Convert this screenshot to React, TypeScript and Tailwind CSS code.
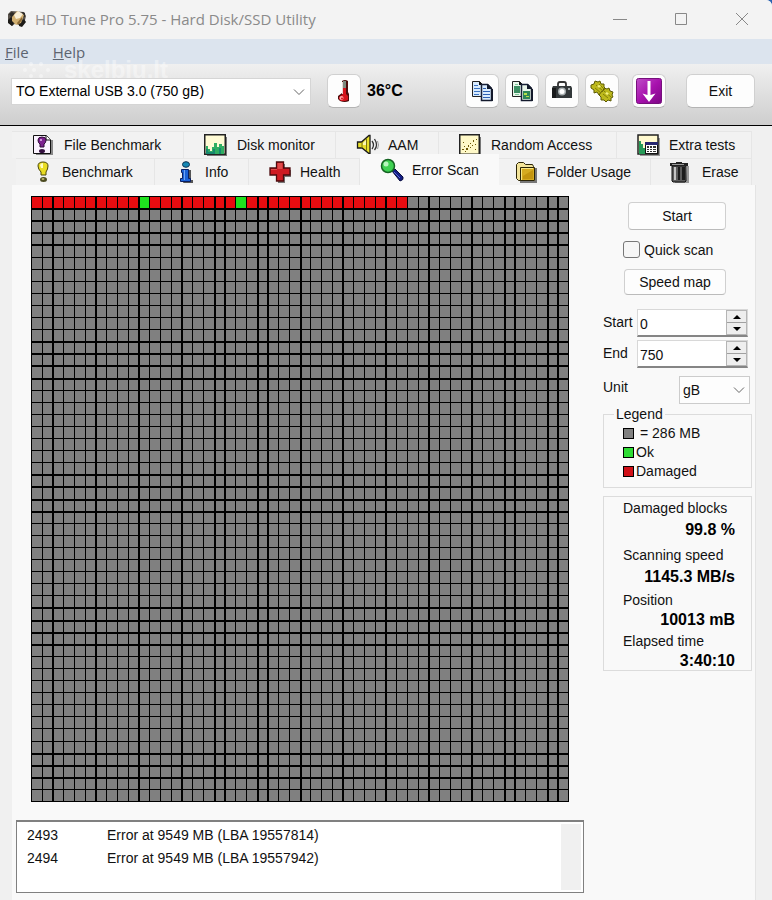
import { useState } from 'react';
import type { ReactNode } from 'react';

const COLS = 50;
const ROWS = 50;
const GRID_W = 538;
const GRID_H = 606;
const SCANNED = 35;
const OK_BLOCKS = [10, 19];
const THICK_COLS = [2, 6, 10, 14, 17, 18, 21, 22, 25, 29, 33, 37, 41, 44, 45, 48, 49];
const THICK_ROWS = [1, 2, 3, 4, 12, 13, 14, 15, 23, 24, 25, 26, 34, 35, 36, 37, 46, 47, 48];

const colX = (i: number) => Math.round((i * (GRID_W - 1)) / COLS);
const rowY = (i: number) => Math.round((i * (GRID_H - 1)) / ROWS);

function BlockMap() {
  return (
    <svg viewBox={`0 0 ${GRID_W} ${GRID_H}`} shapeRendering="crispEdges" className="block w-full" role="img" aria-label="Block map">
      <rect width={GRID_W} height={GRID_H} fill="#808080" />
      {Array.from({ length: SCANNED }, (_, i) => (
        <rect
          key={i}
          x={colX(i)}
          y={0}
          width={colX(i + 1) - colX(i)}
          height={rowY(1)}
          fill={OK_BLOCKS.includes(i) ? '#1fe01f' : '#e80c10'}
        />
      ))}
      {Array.from({ length: COLS + 1 }, (_, i) => (
        <rect key={i} x={colX(i)} y={0} width={THICK_COLS.includes(i) ? 2 : 1} height={GRID_H} fill="#000" />
      ))}
      {Array.from({ length: ROWS + 1 }, (_, i) => (
        <rect key={i} x={0} y={rowY(i)} width={GRID_W} height={THICK_ROWS.includes(i) ? 2 : 1} fill="#000" />
      ))}
    </svg>
  );
}

function AppIcon() {
  return (
    <svg viewBox="0 0 20 20" className="w-5 h-5">
      <path d="M1 5l3-3 13 1 2 4-2 8-4 2-4-3-4 3-4-4z" fill="#57514a" />
      <path d="M1 11l3-3 3 2v4l-2 3-4-3zM12 14l5-4 2 3-4 5-3-1z" fill="#1d1b18" />
      <path d="M2 5l3-2 3 2-3 4zM15 3l3 1v4l-3-1z" fill="#2d2a26" />
      <path d="M5 8l5-6 7 4-3 8-5 2-4-4z" fill="#d2b071" />
      <path d="M7 6l4-4 5 3-3 4-4 1z" fill="#f8eed6" />
      <path d="M10 14l5-6v3l-4 5z" fill="#8c6a35" />
    </svg>
  );
}

function ThermometerIcon() {
  return (
    <svg viewBox="0 0 14 24" className="w-[14px] h-6">
      <path d="M5 2q3-2 6 0v11l1 2v7q-4 2-9 0l-2-2v-3l4-3z" fill="#4a0c0c" />
      <path d="M6 2h3v8H6z" fill="#7e8b80" />
      <path d="M6 9h3v6l2 2v4l-3 1H4l-2-2v-2l4-3z" fill="#d5141c" />
      <path d="M5 3h1v12H5z" fill="#e9d5d5" />
      <circle cx="4.500" cy="19" r="2" fill="#ffaaaa" />
      <circle cx="5" cy="19.500" r="1" fill="#d5141c" />
    </svg>
  );
}

function CopyIcon({ image = false }: { image?: boolean }) {
  const page = image ? '#e9f6ea' : '#d9ecff';
  return (
    <svg viewBox="0 0 22 22" className="w-[22px] h-[22px]">
      <path d="M1.500 1.500h7l3 3v12h-10z" fill={page} stroke="#222" />
      <path d="M8 1v4h4z" fill="#111" />
      <path d="M10.500 4.500h6l4 4v12h-10z" fill={page} stroke="#182038" strokeWidth="1.500" />
      <path d="M16 4v5h5v-1l-4-4zM20 9h2v12H11v-1h9z" fill="#141a2c" />
      {image ? (
        <>
          <path d="M3 6h6v7H3z" fill="#3d8f63" />
          <path d="M4 4h3v1H4zM4 14h4v1H4z" fill="#7fc79a" />
          <path d="M12 11h7v8h-7z" fill="#2f8658" />
          <path d="M13 13h3v2h-3zM15 16h3v1h-3z" fill="#b8e04a" />
        </>
      ) : (
        <>
          <path d="M3 5h4v1H3zM3 8h6v1H3zM3 11h6v1H3zM3 14h5v1H3z" fill="#3d74c4" />
          <path d="M12 8h3v1h-3zM12 11h7v1h-7zM12 14h7v1h-7zM12 17h7v1h-7z" fill="#2d61b4" />
        </>
      )}
    </svg>
  );
}

function CameraIcon() {
  return (
    <svg viewBox="0 0 22 20" className="w-[22px] h-5">
      <path d="M7 6V3q0-2 2-2h4q2 0 2 2v3" fill="none" stroke="#333" strokeWidth="1.800" />
      <path d="M2 5h18l1 2v10H1V7z" fill="#33383a" />
      <path d="M1 7h4v10H1z" fill="#181a1b" />
      <circle cx="11" cy="10.500" r="4" fill="#a9b0b2" />
      <circle cx="11" cy="10.500" r="2.500" fill="#fff" />
      <path d="M17 7h2v2h-2z" fill="#a9b0b2" />
    </svg>
  );
}

function GearsIcon() {
  return (
    <svg viewBox="0 0 24 22" className="w-6 h-[22px]">
      <g stroke="#5c5a05" strokeWidth="1">
        <g fill="#bdb91c">
          <path d="M1 5l3-1 1-3 3 1 2-1 1 3 3 0 0 3 2 2-2 2 0 3-3-1-2 2-2-3-3 1 0-3-3-2z" />
          <path d="M11 12l2-1 1-3 3 1 2-1 1 3 3 1-1 3 1 2-2 1 0 3-3-1-2 2-2-2-3 0 0-3-2-2z" />
        </g>
        <path d="M6 5l7 6M5 8l6 5M9 4l6 6M14 11l7 6M13 14l5 4" fill="none" stroke="#837f08" />
      </g>
      <path d="M7 6l2-1 2 1-2 2zM15 13l2-1 2 2-2 1z" fill="#f4f27d" />
    </svg>
  );
}

function UpdateIcon() {
  return (
    <svg viewBox="0 0 26 26" className="w-[26px] h-[26px]">
      <defs>
        <linearGradient id="purple" x1="0" y1="0" x2="1" y2="1">
          <stop offset="0" stopColor="#c04fc8" />
          <stop offset=".5" stopColor="#a812ae" />
          <stop offset="1" stopColor="#7c0684" />
        </linearGradient>
      </defs>
      <rect x=".5" y=".5" width="25" height="25" rx="2" fill="url(#purple)" stroke="#76107c" />
      <path d="M11.500 3h3v14l5-1.500-6.500 8.500-6.500-8.500 5 1.500z" fill="#fff" />
    </svg>
  );
}

function FileBenchmarkIcon() {
  return (
    <svg viewBox="0 0 22 22" className="w-[22px] h-[22px]">
      <path d="M4 21h17V6h-2v13H4z" fill="#888" />
      <path d="M1.500 1.500h13l4 4v14h-17z" fill="#fbf3ff" stroke="#111" />
      <path d="M14 1.500v4.500h5" fill="#fff" stroke="#111" />
      <path d="M6 6q0-3 4-3t4 3q0 3-2 4v3H8v-3Q6 9 6 6z" fill="#7c1f8f" stroke="#2d0a36" />
      <circle cx="9" cy="6" r="1" fill="#e8b9f2" />
      <ellipse cx="10" cy="17" rx="3" ry="2" fill="#351040" />
    </svg>
  );
}

function MonitorIcon() {
  return (
    <svg viewBox="0 0 23 22" className="w-[23px] h-[22px]">
      <path d="M3 22h20V3h-2v17H3z" fill="#777" />
      <rect x=".75" y=".75" width="20.500" height="19.500" fill="#fffbd5" stroke="#222" strokeWidth="1.500" />
      <path d="M2 20v-8h2v3h2v2h2v-4h2v-4h3v4h2v-3h3v2h2v8z" fill="#2fae62" />
      <path d="M2 20v-5h2v3h5v-3h2v5zM15 20v-6h2v6z" fill="#17886f" />
    </svg>
  );
}

function SpeakerIcon() {
  return (
    <svg viewBox="0 0 24 22" className="w-6 h-[22px]">
      <path d="M1.500 8h4L13 1.500h1v18h-1L6 14H1.500z" fill="#e8df2a" stroke="#1a1a1a" strokeWidth="1.300" />
      <path d="M6 8v6M10.500 5v12" stroke="#7a7412" />
      <path d="M7 9l3-3v5H7z" fill="#fbf8b4" />
      <path d="M16 7q3 4 0 8M18.500 5q4 6 0 11" fill="none" stroke="#333" strokeWidth="1.300" />
      <path d="M21.500 7q2 4 0 8" fill="none" stroke="#999" />
    </svg>
  );
}

function ScatterIcon() {
  return (
    <svg viewBox="0 0 22 22" className="w-[22px] h-[22px]">
      <path d="M3 22h19V3h-2v17H3z" fill="#777" />
      <rect x=".75" y=".75" width="19.500" height="19.500" fill="#fff9c8" stroke="#222" strokeWidth="1.500" />
      <path
        d="M3 15h2v1H3zM5 12h1v1H5zM7 14h2v2H7zM6 17h1v1H6zM9 11h1v2H9zM11 13h1v1h-1zM11 9h1v1h-1zM13 11h1v1h-1zM14 6h1v2h-1zM16 10h1v1h-1zM17 5h1v1h-1zM4 8h1v1H4zM16 15h1v1h-1z"
        fill="#6d5806"
      />
    </svg>
  );
}

function ExtraIcon() {
  return (
    <svg viewBox="0 0 24 22" className="w-6 h-[22px]">
      <path d="M3 22h20V4h-2v16H3z" fill="#999" />
      <rect x="1" y="1" width="20" height="19" fill="#fff9cf" stroke="#222" strokeWidth="1.500" />
      <path d="M2 7h2v3h2v4h2v6H2z" fill="#279b58" />
      <rect x="8.500" y="8.500" width="12" height="11" fill="#fff" stroke="#111" />
      <path d="M8 8h13v3H8z" fill="#26266e" />
      <path d="M10 12h2v2h-2zM13 12h2v2h-2zM16 12h3v2h-3zM10 15h2v1h-2zM13 15h2v1h-2zM16 15h3v1h-3zM10 17h2v1h-2zM13 17h2v1h-2zM16 17h3v1h-3z" fill="#333" />
    </svg>
  );
}

function BulbIcon() {
  return (
    <svg viewBox="0 0 14 22" className="w-[14px] h-[22px]">
      <path d="M2 5q0-4 5-4t5 4q0 3-2 6v3H5v-3Q2 8 2 5z" fill="#e9dd23" stroke="#4c4806" />
      <path d="M4 4q1-2 3-2v5H5z" fill="#fffcc0" />
      <ellipse cx="7.500" cy="18.500" rx="3.500" ry="2.500" fill="#4b4a20" />
      <ellipse cx="7" cy="18" rx="1.500" ry="1" fill="#b9b56a" />
    </svg>
  );
}

function InfoIcon() {
  return (
    <svg viewBox="0 0 14 22" className="w-[14px] h-[22px]">
      <path d="M4 22h10v-3h-2V9h-2z" fill="#555" />
      <ellipse cx="7" cy="3.500" rx="3.500" ry="2.800" fill="#1688b4" stroke="#0b2f50" />
      <path d="M2.500 8.500h7v9h2v3h-10v-3h2v-6h-1z" fill="#1c62d6" stroke="#0a1f63" />
      <path d="M5 9h1v10H5z" fill="#6fa4f4" />
    </svg>
  );
}

function CrossIcon() {
  return (
    <svg viewBox="0 0 23 22" className="w-[23px] h-[22px]">
      <path d="M9 3h7v6h6v7h-6v6H9z" fill="#777" />
      <path d="M7.500 1h7v6h6.500v7h-6.500v6h-7v-6H1V7h6.500z" fill="#cf1a22" stroke="#4d0a0d" strokeWidth="1.300" />
      <path d="M8.500 2h5v6H8.500zM2 8h6v1H2z" fill="#e04a4a" />
    </svg>
  );
}

function SearchIcon() {
  return (
    <svg viewBox="0 0 24 24" className="w-6 h-6">
      <path d="M12 13l3-2 8 8q1 3-3 4z" fill="#141d84" stroke="#0a0e3e" />
      <path d="M14 14l6 6" stroke="#5867d9" />
      <circle cx="8" cy="8" r="6.500" fill="#3fd152" stroke="#146322" strokeWidth="1.500" />
      <circle cx="6" cy="6" r="2.500" fill="#b7f7bd" />
    </svg>
  );
}

function FolderIcon() {
  return (
    <svg viewBox="0 0 22 22" className="w-[22px] h-[22px]">
      <path d="M5 22h17V7h-2v13H5z" fill="#777" />
      <path d="M1.500 3.500l2-2h5l2 2h7l1 2v3h-12v11h-3l-2-2z" fill="#f3e49a" stroke="#2b2407" />
      <path d="M5.500 6.500h14v13h-14z" fill="#d6ab20" stroke="#2b2407" />
      <path d="M6 7h12v1H7v11H6z" fill="#f7e584" />
      <path d="M8 15l10-6v9H8z" fill="#c4950f" />
    </svg>
  );
}

function BinIcon() {
  return (
    <svg viewBox="0 0 21 23" className="w-[21px] h-[23px]">
      <path d="M18 5h2v17H6v-2h11z" fill="#999" />
      <path d="M3 5h14v15l-1 1H4l-1-1z" fill="#5c5c5c" stroke="#111" />
      <path d="M5 6h2v13H5z" fill="#c4c4c4" />
      <path d="M9 6h2v13H9zM13 6h3v13h-3z" fill="#1c1c1c" />
      <path d="M1 2h6V1h6v1h6v3H1z" fill="#222" />
      <path d="M3 3h12v1H3z" fill="#999" />
    </svg>
  );
}

function Chevron({ className }: { className: string }) {
  return (
    <svg viewBox="0 0 12 8" className={`pointer-events-none absolute w-3 h-2 ${className}`}>
      <path d="M1 1.500l5 5 5-5" fill="none" stroke="#666" />
    </svg>
  );
}

function ToolButton({ label, children }: { label: string; children: ReactNode }) {
  return (
    <button
      aria-label={label}
      className="flex items-center justify-center w-[34px] h-[34px] shrink-0 bg-[#fdfdfd] border border-[#d0d0d0] border-b-[#b4b4b4] rounded-md"
    >
      {children}
    </button>
  );
}

type TabInfo = { name: string; icon: ReactNode; gap: string };

const topTabs: TabInfo[] = [
  { name: 'File Benchmark', icon: <FileBenchmarkIcon />, gap: 'gap-[10px] pl-5' },
  { name: 'Disk monitor', icon: <MonitorIcon />, gap: 'gap-[10px] pl-5' },
  { name: 'AAM', icon: <SpeakerIcon />, gap: 'gap-2 pl-5' },
  { name: 'Random Access', icon: <ScatterIcon />, gap: 'gap-[10px] pl-5' },
  { name: 'Extra tests', icon: <ExtraIcon />, gap: 'gap-2 pl-5' },
];

const bottomTabs: TabInfo[] = [
  { name: 'Benchmark', icon: <BulbIcon />, gap: 'gap-3 pl-5' },
  { name: 'Info', icon: <InfoIcon />, gap: 'gap-3 pl-6' },
  { name: 'Health', icon: <CrossIcon />, gap: 'gap-2 pl-5' },
  { name: 'Error Scan', icon: <SearchIcon />, gap: 'gap-2 pl-5' },
  { name: 'Folder Usage', icon: <FolderIcon />, gap: 'gap-[10px] pl-4' },
  { name: 'Erase', icon: <BinIcon />, gap: 'gap-3 pl-[18px]' },
];

function Tab({ tab, active }: { tab: TabInfo; active: boolean }) {
  return (
    <button
      role="tab"
      aria-selected={active}
      className={`flex items-center whitespace-nowrap ${tab.gap} ${
        active ? 'bg-[#f9f9f9] -mt-1' : 'bg-[#f2f2f2] border-t border-r border-[#e6e6e6]'
      }`}
    >
      {tab.icon}
      {tab.name}
    </button>
  );
}

function SpinBox({ id, label, initial }: { id: string; label: string; initial: number }) {
  const [value, setValue] = useState(initial);
  return (
    <div className="flex pr-1">
      <label htmlFor={id} className="w-[34px] shrink-0 pt-[2px]">{label}</label>
      <div className="flex flex-1 min-w-0 h-7 bg-white border border-[#d8d8d8] border-b-2 border-b-[#858585]">
        <input
          id={id}
          value={value}
          onChange={(e) => setValue(Number(e.target.value) || 0)}
          className="flex-1 min-w-0 pl-[2px] pt-[2px] bg-transparent outline-none"
        />
        <div className="flex flex-col w-[21px] shrink-0 bg-[#eeeeee] border border-[#b5b5b5]">
          <button aria-label={`${label} up`} onClick={() => setValue(value + 1)} className="flex flex-1 items-center justify-center border-b border-[#a0a0a0]">
            <svg viewBox="0 0 8 4" className="w-2 h-1"><path d="M0 4l4-4 4 4z" /></svg>
          </button>
          <button aria-label={`${label} down`} onClick={() => setValue(value - 1)} className="flex flex-1 items-center justify-center">
            <svg viewBox="0 0 8 4" className="w-2 h-1"><path d="M0 0l4 4 4-4z" /></svg>
          </button>
        </div>
      </div>
    </div>
  );
}

const legend = [
  { label: '= 286 MB', color: 'bg-[#808080]', gap: 'gap-[6px]' },
  { label: 'Ok', color: 'bg-[#2fdc35]', gap: 'gap-[2px]' },
  { label: 'Damaged', color: 'bg-[#d01018]', gap: 'gap-[2px]' },
];

const stats = [
  { label: 'Damaged blocks', value: '99.8 %', size: 'leading-[22px] mb-[3px]' },
  { label: 'Scanning speed', value: '1145.3 MB/s', size: 'leading-[22px] mb-[3px]' },
  { label: 'Position', value: '10013 mB', size: 'leading-[19px] mb-[3px]' },
  { label: 'Elapsed time', value: '3:40:10', size: 'leading-[19px]' },
];

const errors = [
  { id: 2493, text: 'Error at 9549 MB (LBA 19557814)' },
  { id: 2494, text: 'Error at 9549 MB (LBA 19557942)' },
];

export default function App() {
  return (
    <div className="bg-[#2a62b0]">
      <div className="flex flex-col min-h-screen overflow-hidden rounded-tr-md bg-[#f0f0f0] font-['Liberation_Sans',Arial,sans-serif] text-[14px] leading-[22px] text-[#111111]">
        <header className="flex items-center h-[39px] pl-[7px] pb-[2px] bg-[#f3f3f3] text-[#8a8a8a]">
          <AppIcon />
          <h1 className="flex-1 pl-2 font-['Open_Sans','Noto_Sans',sans-serif] text-[15px]">HD Tune Pro 5.75 - Hard Disk/SSD Utility</h1>
          <button aria-label="Minimize" className="flex justify-center w-[61px]">
            <svg viewBox="0 0 14 14" className="w-[14px] h-[14px]"><path d="M0 7.500h14" stroke="#888" /></svg>
          </button>
          <button aria-label="Maximize" className="flex justify-center w-[61px]">
            <svg viewBox="0 0 14 14" className="w-[14px] h-[14px]"><path d="M1.500 1.500h11v11h-11z" fill="none" stroke="#888" /></svg>
          </button>
          <button aria-label="Close" className="flex justify-center w-[61px]">
            <svg viewBox="0 0 14 14" className="w-[14px] h-[14px]"><path d="M1 1l12 12M13 1L1 13" stroke="#888" /></svg>
          </button>
        </header>

        <nav className="relative flex gap-6 h-[25px] items-center pl-[5px] bg-[#dce4ee] font-['Open_Sans','Noto_Sans',sans-serif] text-[15px] text-[#5d6470]">
          <button><span className="underline">F</span>ile</button>
          <button><span className="underline">H</span>elp</button>
          <div className="pointer-events-none absolute z-10 left-[22px] top-[19px] flex items-center gap-3 font-['Liberation_Sans',Arial,sans-serif] text-white/40">
            <svg viewBox="0 0 30 18" className="w-[30px] h-[18px]" fill="currentColor">
              <circle cx="9" cy="3" r="2" /><circle cx="19" cy="3" r="2" /><circle cx="3" cy="9" r="2" /><circle cx="12" cy="9" r="2" />
              <circle cx="26" cy="9" r="2" /><circle cx="9" cy="15" r="2" /><circle cx="19" cy="15" r="2" />
            </svg>
            <span className="text-[24px] leading-6 font-bold">skelbiu.lt</span>
          </div>
        </nav>

        <div className="flex items-center h-[62px] pl-[11px] pr-[17px] pb-[7px] bg-linear-to-b from-[#f0f0f0] to-[#cecece] border-b border-black">
          <div className="relative w-[300px]">
            <select aria-label="Drive" className="w-full h-[27px] pl-1 appearance-none bg-white border border-[#d5d5d5] text-black">
              <option>TO External USB 3.0 (750 gB)</option>
            </select>
            <Chevron className="right-[6px] top-[10px]" />
          </div>
          <div className="flex items-center gap-[6px] pl-4">
            <ToolButton label="Temperature"><ThermometerIcon /></ToolButton>
            <span className="text-[16px] font-bold text-black">36°C</span>
          </div>
          <div className="flex gap-[6px] ml-auto">
            <ToolButton label="Copy text"><CopyIcon /></ToolButton>
            <ToolButton label="Copy image"><CopyIcon image /></ToolButton>
            <ToolButton label="Save screenshot"><CameraIcon /></ToolButton>
            <ToolButton label="Options"><GearsIcon /></ToolButton>
          </div>
          <div className="flex gap-5 pl-[13px]">
            <ToolButton label="Update"><UpdateIcon /></ToolButton>
            <button className="w-[69px] h-[34px] bg-[#fdfdfd] border border-[#d0d0d0] border-b-[#b4b4b4] rounded-md">Exit</button>
          </div>
        </div>

        <div className="flex flex-col flex-1 pl-3 pr-4 pt-[5px]">
          <div role="tablist" className="pr-1">
            <div className="grid grid-cols-[172fr_152fr_103fr_178fr_135fr] h-[27px]">
              {topTabs.map((tab) => (
                <Tab key={tab.name} tab={tab} active={false} />
              ))}
            </div>
            <div className="grid grid-cols-[139fr_94fr_111fr_139fr_152fr_101fr] h-[27px] pl-1">
              {bottomTabs.map((tab) => (
                <Tab key={tab.name} tab={tab} active={tab.name === 'Error Scan'} />
              ))}
            </div>
          </div>

          <main className="flex flex-1 gap-[19px] pl-1 pr-[3px] pt-[11px] pb-2 bg-[#f9f9f9] border-r border-[#e4e4e4]">
            <div className="flex-1 min-w-0">
              <div className="px-[15px]">
                <BlockMap />
              </div>
              <div className="flex h-[73px] mt-[18px] p-[2px] bg-white border border-t-2 border-[#808080]">
                <table className="flex-1 block leading-[23px]">
                  <tbody>
                    {errors.map((err) => (
                      <tr key={err.id}>
                        <td className="w-[88px] pl-2">{err.id}</td>
                        <td className="whitespace-nowrap">{err.text}</td>
                      </tr>
                    ))}
                  </tbody>
                </table>
                <div className="w-5 bg-[#f0f0f0]" />
              </div>
            </div>

            <aside className="w-[149px] shrink-0 pt-[6px]">
              <div className="pl-[25px] pr-[26px]">
                <button className="w-full h-7 bg-[#fdfdfd] border border-[#d0d0d0] border-b-[#bbbbbb] rounded">Start</button>
              </div>
              <label className="flex items-center gap-1 pl-5 my-[10px] h-[19px] whitespace-nowrap">
                <input type="checkbox" className="w-[17px] h-[17px] appearance-none bg-[#f6f6f6] border border-[#777777] rounded-[3px] checked:bg-[#0067c0]" />
                Quick scan
              </label>
              <div className="pl-[21px] pr-[26px]">
                <button className="w-full h-[26px] bg-[#fdfdfd] border border-[#d0d0d0] border-b-[#bbbbbb] rounded">Speed map</button>
              </div>
              <div className="flex flex-col gap-[3px] mt-[14px]">
                <SpinBox id="start" label="Start" initial={0} />
                <SpinBox id="end" label="End" initial={750} />
              </div>
              <div className="flex justify-between mt-2 pr-[2px]">
                <label htmlFor="unit">Unit</label>
                <div className="relative w-[71px]">
                  <select id="unit" className="w-full h-7 pl-[3px] appearance-none bg-[#fdfdfd] border border-[#cccccc]">
                    <option>gB</option>
                  </select>
                  <Chevron className="right-[5px] top-[10px]" />
                </div>
              </div>

              <fieldset className="h-[84px] pl-[19px] border border-[#dcdcdc]">
                <legend className="-ml-[9px] px-[2px] leading-5">Legend</legend>
                {legend.map((item) => (
                  <div key={item.label} className={`flex items-center leading-[19px] ${item.gap}`}>
                    <span className={`w-[11px] h-[11px] border border-black ${item.color}`} />
                    {item.label}
                  </div>
                ))}
              </fieldset>

              <dl className="mt-2 pl-[19px] pr-4 border border-[#dcdcdc]">
                {stats.map((s) => (
                  <div key={s.label} className={s.size}>
                    <dt>{s.label}</dt>
                    <dd className="text-right text-[16px] font-bold text-black">{s.value}</dd>
                  </div>
                ))}
              </dl>
            </aside>
          </main>
        </div>
      </div>
    </div>
  );
}
